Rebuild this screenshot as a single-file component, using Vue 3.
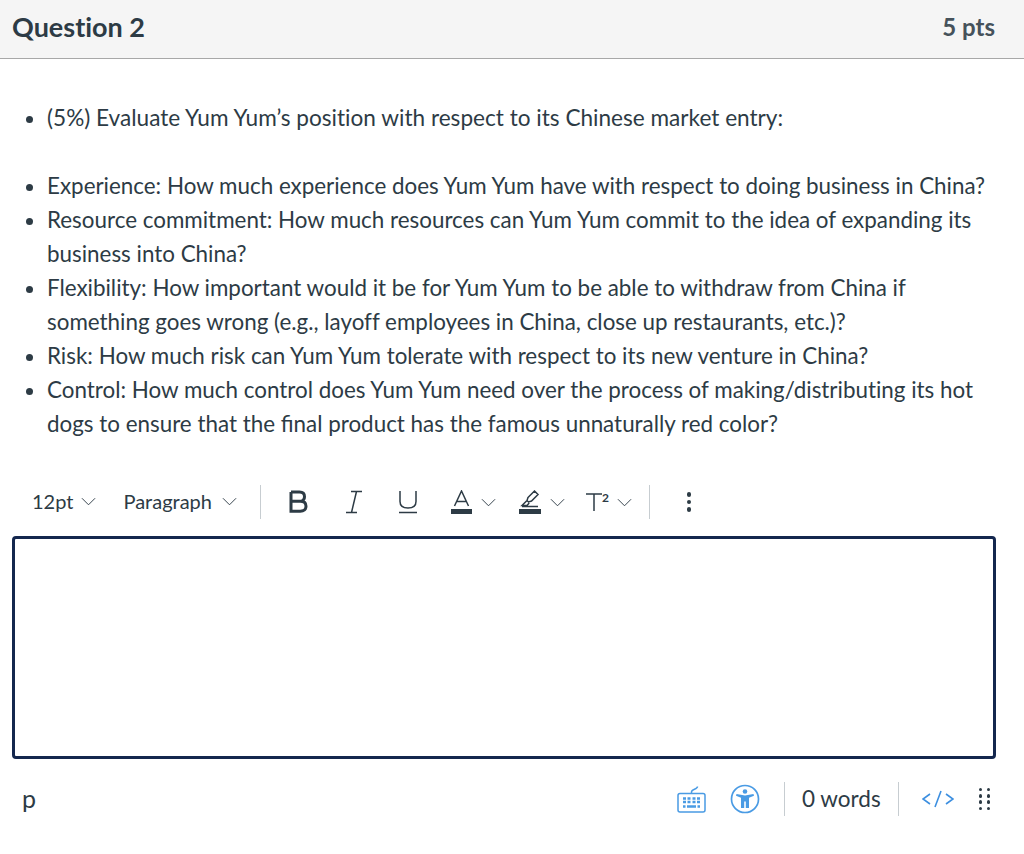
<template>
  <div class="question">
    <header class="q-header">
      <h2>Question 2</h2>
      <div class="pts">5 pts</div>
    </header>

    <div class="q-body">
      <ul class="first-list">
        <li>(5%) Evaluate Yum Yum’s position with respect to its Chinese market entry:</li>
      </ul>
      <ul class="main-list">
        <li v-for="item in items" :key="item">{{ item }}</li>
      </ul>
    </div>

    <div class="toolbar">
      <button class="select size">12pt <svg class="chev" viewBox="0 0 16 9"><path d="M1 1l7 7 7-7" /></svg></button>
      <button class="select para">Paragraph <svg class="chev" viewBox="0 0 16 9"><path d="M1 1l7 7 7-7" /></svg></button>
      <span class="divider first"></span>
      <svg class="tool bold" width="19" height="24" viewBox="0 0 19 24"><path d="M2 2h8.500c3.300 0 5 1.800 5 4.700 0 2.800-1.700 4.600-4.800 4.600H2m0 0h9.300c3.500 0 5.700 1.900 5.700 4.900 0 3.100-2.200 5.100-5.700 5.100H2zM2 2v20" /></svg>
      <svg class="tool italic" width="16" height="24" viewBox="0 0 16 24"><path d="M5 1.500h11M0 22.500h11M10.500 1.500l-5 21" /></svg>
      <svg class="tool under" width="18" height="24" viewBox="0 0 18 24"><path d="M1 1v10.500c0 4.500 3 6.500 8 6.500s8-2 8-6.500V1M0 22.500h18" /></svg>
      <span class="group color">
        <svg class="tool" width="21" height="25" viewBox="0 0 21 25"><path d="M3.500 16 10.500 1l7 15M5.800 11.500h9.400" /><rect class="fill" x="0" y="19" width="21" height="5" /></svg>
        <svg class="chev" viewBox="0 0 16 9"><path d="M1 1l7 7 7-7" /></svg>
      </span>
      <span class="group hilite">
        <svg class="tool" width="22" height="25" viewBox="0 0 22 25"><path d="M9 7.500 15.500 1l3.500 3.500-6.500 6.500-3 1-1.500-1.500zM7.500 11 3 15.500h5l2.200-2.500M3 16.500h16" /><rect class="fill" x="0" y="19" width="22" height="5" /></svg>
        <svg class="chev" viewBox="0 0 16 9"><path d="M1 1l7 7 7-7" /></svg>
      </span>
      <span class="group sup">
        <svg class="tool" width="16" height="18" viewBox="0 0 16 18"><path d="M0 1h16M8 1v17" /></svg>
        <span class="sup-two">2</span>
        <svg class="chev" viewBox="0 0 16 9"><path d="M1 1l7 7 7-7" /></svg>
      </span>
      <span class="divider second"></span>
      <span class="more"><i></i><i></i><i></i></span>
    </div>

    <div class="editor"></div>

    <footer class="status">
      <span class="path">p</span>
      <svg class="kbd" width="29" height="27" viewBox="0 0 29 27">
        <path d="M14.500 7V6c0-1.500 1-2 3-2.800s3-1.200 3-2.700" />
        <rect x="1" y="7.500" width="27" height="18.500" rx="2" />
        <path class="keys" d="M6 12.500h3M10.500 12.500h3M15.500 12.500h3M20 12.500h3M6 16h3M10.500 16h3M15.500 16h3M20 16h3M6 20.500h2.500M10 20.500h9M20.500 20.500h2.500" />
      </svg>
      <svg class="a11y" width="30" height="30" viewBox="0 0 30 30">
        <circle cx="15" cy="15" r="13.500" />
        <circle class="solid" cx="15" cy="7.500" r="2.300" />
        <path class="solid" d="M6.500 10 15 11.500l8.500-1.500.5 1.800-5 2V24h-3.200v-6.500h-1.600V24H11V13.800l-5-2z" />
      </svg>
      <span class="sep"></span>
      <span class="words">0 words</span>
      <span class="sep"></span>
      <svg class="code" width="32" height="18" viewBox="0 0 32 18">
        <path d="M8 4 1 9l7 5M24 4l7 5-7 5M19 1l-6 16" />
      </svg>
      <span class="grip"><i v-for="n in 8" :key="n"></i></span>
    </footer>
  </div>
</template>

<script setup>
const items = [
  'Experience: How much experience does Yum Yum have with respect to doing business in China?',
  'Resource commitment: How much resources can Yum Yum commit to the idea of expanding its business into China?',
  'Flexibility: How important would it be for Yum Yum to be able to withdraw from China if something goes wrong (e.g., layoff employees in China, close up restaurants, etc.)?',
  'Risk: How much risk can Yum Yum tolerate with respect to its new venture in China?',
  'Control: How much control does Yum Yum need over the process of making/distributing its hot dogs to ensure that the ﬁnal product has the famous unnaturally red color?',
]
</script>

<style scoped>
.question {
  width: 1024px;
  height: 854px;
  overflow: hidden;
  color: #2d3b45;
  font-family: Lato, "Open Sans", sans-serif;
  font-variant-ligatures: none;
  background: #fff;
}

.q-header {
  height: 59px;
  box-sizing: border-box;
  display: flex;
  justify-content: space-between;
  align-items: center;
  padding: 0 29px 4px 12px;
  background: #f5f5f5;
  border-bottom: 1px solid #a8a8a8;
}

h2 {
  margin: -2px 0 0;
  font-size: 27px;
  font-weight: 700;
}

.pts {
  font-size: 24px;
  font-weight: 700;
  color: #46525b;
  margin-top: -1px;
}

.q-body {
  font-size: 22.400px;
  line-height: 34px;
}

ul {
  margin: 0;
  padding: 0 30px 0 47px;
}

.first-list {
  padding-top: 42px;
  font-size: 22.600px;
}

.main-list {
  margin-top: 34px;
}

.toolbar {
  height: 40px;
  margin-top: 41px;
  display: flex;
  align-items: center;
}

button {
  border: 0;
  padding: 0;
  background: none;
  color: inherit;
  font: inherit;
  font-size: 20px;
  display: flex;
  align-items: center;
  margin-top: -2px;
}

.size {
  margin-left: 32px;
  gap: 8px;
}

.para {
  margin-left: 27px;
  gap: 10px;
}

.chev {
  width: 15px;
  height: 9px;
  fill: none;
  stroke: #2d3b45;
  stroke-width: 1;
  flex: none;
}

.divider {
  width: 1px;
  height: 34px;
  background: #c7cdd1;
}

.divider.first {
  margin-left: 23px;
}

.tool path {
  fill: none;
  stroke: #2d3b45;
  stroke-width: 1.500;
}

.tool.bold {
  margin-left: 28px;
}

.tool.bold path {
  stroke-width: 3;
}

.tool.italic {
  margin-left: 38px;
}

.tool.under {
  margin-left: 37px;
}

.fill {
  fill: #2d3b45;
  stroke: none;
}

.group {
  display: flex;
  align-items: center;
  gap: 9px;
}

.color {
  margin-left: 34px;
}

.hilite {
  margin-left: 23px;
}

.sup {
  margin-left: 21px;
  gap: 0;
}

.sup .tool {
  align-self: flex-end;
  margin-bottom: 1px;
}

.sup-two {
  width: 7px;
  margin-right: 8px;
  margin-top: -9px;
  font-size: 12px;
  font-weight: 700;
  line-height: 12px;
}

.divider.second {
  margin-left: 17px;
}

.more {
  margin-left: 37px;
  display: flex;
  flex-direction: column;
  gap: 3px;
}

.more i {
  width: 4.500px;
  height: 4.500px;
  border-radius: 50%;
  background: #2d3b45;
}

.editor {
  margin-top: 14px;
  margin-left: 12px;
  width: 984px;
  height: 223px;
  box-sizing: border-box;
  border: 3px solid #14274e;
  border-radius: 4px;
}

.status {
  height: 40px;
  margin-top: 20px;
  display: flex;
  align-items: center;
  font-size: 22.500px;
}

.path {
  margin-left: 22px;
  margin-top: -3px;
  width: 655px;
  font-size: 25px;
}

.kbd {
  fill: none;
  stroke: #4a9be4;
  stroke-width: 1.500;
}

.kbd .keys {
  stroke-width: 2.400;
}

.a11y {
  margin-left: 24px;
  fill: none;
  stroke: #4a9be4;
  stroke-width: 1.700;
}

.a11y .solid {
  fill: #4a9be4;
  stroke: none;
}

.sep {
  width: 1px;
  height: 34px;
  background: #c7cdd1;
}

.a11y + .sep {
  margin-left: 24px;
}

.words {
  margin-left: 17px;
  margin-right: 17px;
  font-size: 22.500px;
  margin-top: -2px;
}

.code {
  margin-left: 23px;
  fill: none;
  stroke: #3d8fe0;
  stroke-width: 1.600;
}

.grip {
  margin-left: 25px;
  display: grid;
  grid-template-columns: 3.500px 3.500px;
  column-gap: 4.500px;
  row-gap: 2.800px;
}

.grip i {
  width: 3.500px;
  height: 3.500px;
  border-radius: 50%;
  background: #2d3b45;
}
</style>

<style>
html,
body {
  margin: 0;
  background: #fff;
}
</style>
